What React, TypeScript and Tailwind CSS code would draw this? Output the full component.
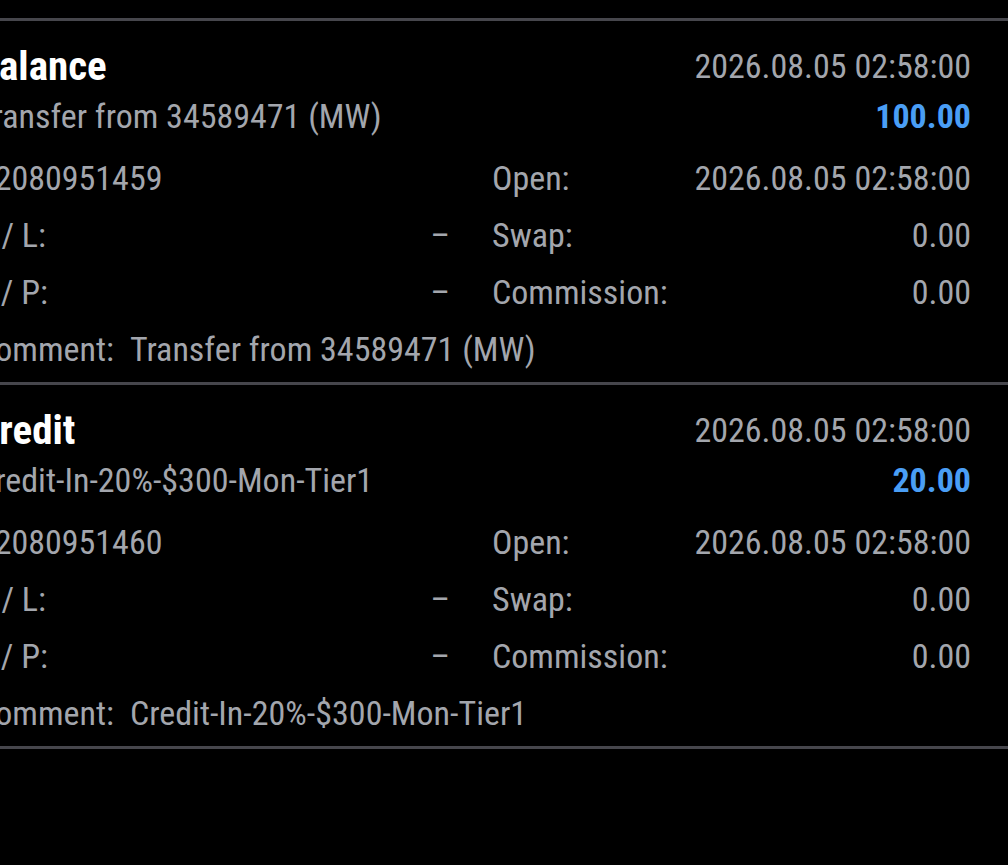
type Deal = {
  type: string;
  description: string;
  time: string;
  amount: string;
  ticket: string;
  comment: string;
};

const deals: Deal[] = [
  {
    type: "Balance",
    description: "Transfer from 34589471 (MW)",
    time: "2026.08.05 02:58:00",
    amount: "100.00",
    ticket: "#2080951459",
    comment: "Transfer from 34589471 (MW)",
  },
  {
    type: "Credit",
    description: "Credit-In-20%-$300-Mon-Tier1",
    time: "2026.08.05 02:58:00",
    amount: "20.00",
    ticket: "#2080951460",
    comment: "Credit-In-20%-$300-Mon-Tier1",
  },
];

function Divider() {
  return <div className="h-[3px] bg-[#46464c]" />;
}

function DealItem({ deal }: { deal: Deal }) {
  return (
    <div className="-ml-[24px] pr-[37px] pt-[20px] pb-[5px]">
      {/* Header */}
      <div className="flex h-[50px] items-center justify-between">
        <span className="text-[41px] font-bold text-white">{deal.type}</span>
        <span className="text-[34px] text-[#a3a6ad]">{deal.time}</span>
      </div>
      <div className="flex h-[50px] items-center justify-between">
        <span className="text-[34px] text-[#a3a6ad]">{deal.description}</span>
        <span className="text-[34px] font-bold text-[#4a9ef5]">{deal.amount}</span>
      </div>

      {/* Details */}
      <div className="mt-[8px] grid grid-cols-[474px_1fr] gap-x-[42px] text-[34px] text-[#a3a6ad]">
        <div className="flex h-[57px] items-center">{deal.ticket}</div>
        <div className="flex h-[57px] items-center justify-between">
          <span>Open:</span>
          <span>{deal.time}</span>
        </div>
        <div className="flex h-[57px] items-center justify-between">
          <span>S / L:</span>
          <span>–</span>
        </div>
        <div className="flex h-[57px] items-center justify-between">
          <span>Swap:</span>
          <span>0.00</span>
        </div>
        <div className="flex h-[57px] items-center justify-between">
          <span>T / P:</span>
          <span>–</span>
        </div>
        <div className="flex h-[57px] items-center justify-between">
          <span>Commission:</span>
          <span>0.00</span>
        </div>
      </div>
      <div className="flex h-[57px] items-center gap-[16px] text-[34px] text-[#a3a6ad]">
        <span>Comment:</span>
        <span>{deal.comment}</span>
      </div>
    </div>
  );
}

export default function App() {
  return (
    <div
      className="h-[865px] w-[1008px] overflow-hidden bg-black pt-[18px] leading-none font-stretch-condensed"
      style={{ fontFamily: "Roboto, 'Liberation Sans', sans-serif" }}
    >
      <Divider />
      {deals.map((d) => (
        <div key={d.ticket}>
          <DealItem deal={d} />
          <Divider />
        </div>
      ))}
    </div>
  );
}
